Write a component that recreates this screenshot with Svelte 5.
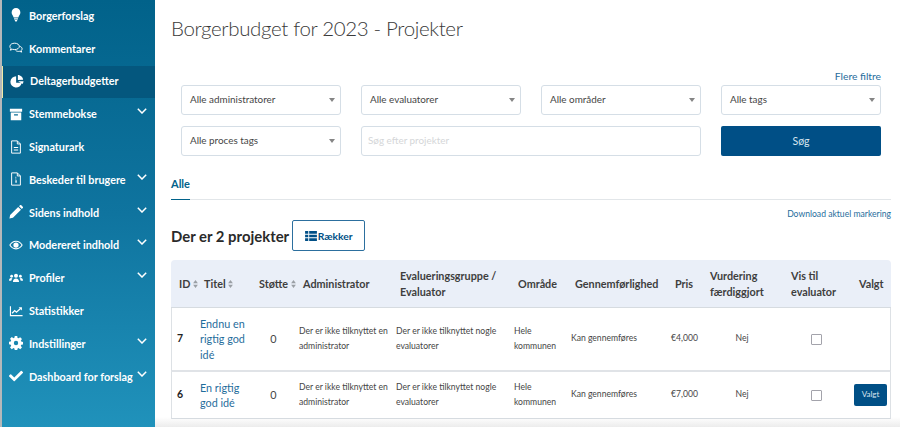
<script>
  const nav = [
    { label: 'Borgerforslag', icon: 'bulb' },
    { label: 'Kommentarer', icon: 'comments' },
    { label: 'Deltagerbudgetter', icon: 'pie', active: true },
    { label: 'Stemmebokse', icon: 'archive', more: true },
    { label: 'Signaturark', icon: 'file' },
    { label: 'Beskeder til brugere', icon: 'note', more: true },
    { label: 'Sidens indhold', icon: 'pencil', more: true },
    { label: 'Modereret indhold', icon: 'eye', more: true },
    { label: 'Profiler', icon: 'users', more: true },
    { label: 'Statistikker', icon: 'chart' },
    { label: 'Indstillinger', icon: 'cog', more: true },
    { label: 'Dashboard for forslag', icon: 'check', more: true }
  ];

  const filters = ['Alle administratorer', 'Alle evaluatorer', 'Alle områder', 'Alle tags'];

  const projects = [
    { id: 7, title: 'Endnu en rigtig god idé', price: '€4,000', selected: false },
    { id: 6, title: 'En rigtig god idé', price: '€7,000', selected: true }
  ];
</script>

{#snippet sortIcon()}
  <svg class="sort" viewBox="0 0 6 10" aria-hidden="true">
    <path d="M3 0 6 4H0zM3 10 0 6h6z" />
  </svg>
{/snippet}

{#snippet navIcon(name)}
  <svg class="nav__icon" viewBox="0 0 16 16" aria-hidden="true">
    {#if name === 'bulb'}
      <path d="M8 0a5 5 0 0 0-5 5c0 2.400 1.800 3.500 2.300 5.800h5.400C11.200 8.500 13 7.400 13 5a5 5 0 0 0-5-5zM5.800 11.800h4.400v1.300H5.800zM6.400 13.800h3.200L8.800 15.500H7.200z" />
    {:else if name === 'comments'}
      <path class="line" d="M6.500 2.500C3.500 2.500 1 4 1 6.200c0 1 .5 1.800 1.300 2.500L1.500 10.500l2.500-1c.8.200 1.600.3 2.500.3 3 0 5.300-1.600 5.300-3.600s-2.300-3.700-5.300-3.700z" />
      <path class="line" d="M12 6c1.800.4 3 1.500 3 2.900 0 .9-.5 1.600-1.100 2.100l.6 1.700-2.300-.9c-1.500.3-3.500.1-4.700-1.100" />
    {:else if name === 'pie'}
      <path d="M7 2.500a6.500 6.500 0 1 0 6.400 7.600H7z" />
      <path d="M9 1c3.200 0 6 2.700 6 5.500l-6 .3zM9.300 8.300H15.500a6.500 6.500 0 0 1-1.300 3.200z" />
    {:else if name === 'archive'}
      <path d="M1 2h14v3.300H1zM2 6.300h12V15H2zm3.800 2v1.300h4.400V8.300z" fill-rule="evenodd" />
    {:else if name === 'file'}
      <path class="line" d="M3 1h6.500L13 4.500V15H3zM9.500 1v3.500H13" />
      <path d="M5.500 8h5v1.200h-5zM5.500 10.800h5V12h-5z" />
    {:else if name === 'note'}
      <path class="line" d="M3 1h6.500L13 4.500V15H3zM9.500 1v3.500H13" />
      <path d="M7.300 5.500h1v1h-1zM7.300 7.500h1v1h-1zM7.300 9.500h1.500v2.800H7.300z" />
    {:else if name === 'pencil'}
      <path d="M0.500 15.500l.8-4L10.500 2.300l3.200 3.200-9.200 9.200zM11.500 1.300l1-1a1.200 1.200 0 0 1 1.600 0l1.600 1.600a1.200 1.200 0 0 1 0 1.600l-1 1z" />
    {:else if name === 'eye'}
      <path d="M8 3C4.500 3 1.800 5.200.3 8c1.500 2.800 4.200 5 7.700 5s6.200-2.200 7.700-5C14.200 5.200 11.500 3 8 3zm0 8.800C5.300 11.800 3 10.300 1.700 8 3 5.700 5.300 4.200 8 4.200s5 1.500 6.300 3.800c-1.300 2.300-3.600 3.800-6.300 3.800z" />
      <circle cx="8" cy="8" r="3" />
    {:else if name === 'users'}
      <circle cx="8" cy="5.500" r="2.300" />
      <circle cx="3" cy="6" r="1.600" />
      <circle cx="13" cy="6" r="1.600" />
      <path d="M4.500 12.500c0-2.300 1.300-3.800 3.500-3.800s3.500 1.500 3.500 3.800zM0 11c0-1.800.9-3 2.300-3 .7 0 1.200.2 1.600.6-.7.7-1.100 1.500-1.300 2.400zM16 11c0-1.800-.9-3-2.300-3-.7 0-1.200.2-1.600.6.700.7 1.100 1.500 1.300 2.400z" />
    {:else if name === 'chart'}
      <path d="M1 2.500h1.300v10.200H15.500V14H1z" />
      <path class="line line--bold" d="M3.500 10.500 6.500 7.500 8.500 9.300 13.500 4.800" />
      <path d="M11 3.800h3.800v3.600z" />
    {:else if name === 'cog'}
      <path fill-rule="evenodd" d="M6.600 0h2.800l.4 2.200 1.100.5 1.900-1.300 2 2-1.300 1.900.5 1.100 2 .4v2.800l-2 .4-.5 1.100 1.300 1.900-2 2-1.900-1.300-1.100.5-.4 2.200H6.600l-.4-2.200-1.100-.5-1.900 1.300-2-2 1.300-1.900-.5-1.100L0 9.400V6.600l2-.4.500-1.100-1.300-1.900 2-2 1.900 1.300 1.100-.5zM8 5.500a2.500 2.500 0 1 0 0 5 2.500 2.500 0 0 0 0-5z" />
    {:else if name === 'check'}
      <path d="M5.400 13.700.2 8.600a.8.800 0 0 1 0-1.100l1.100-1.200a.8.800 0 0 1 1.200 0L6 9.800l7.500-7.500a.8.800 0 0 1 1.100 0l1.200 1.200a.8.800 0 0 1 0 1.100l-9.200 9.100a.8.800 0 0 1-1.200 0z" />
    {/if}
  </svg>
{/snippet}

<div class="page">
  <aside class="side">
    {#each nav as item (item.label)}
      <div class="nav" class:nav--active={item.active}>
        {@render navIcon(item.icon)}
        <span class="nav__label">{item.label}</span>
        {#if item.more}
          <svg class="nav__more" viewBox="0 0 10 6" aria-hidden="true">
            <path d="M.8.8 5 5 9.200.8" />
          </svg>
        {/if}
      </div>
    {/each}
  </aside>

  <main class="main">
    <h1 class="title">Borgerbudget for 2023 - Projekter</h1>

    <section class="filters">
      <div class="filters__more">Flere filtre</div>
      <div class="filters__grid">
        {#each filters as f (f)}
          <div class="select">{f}<span class="select__arrow"></span></div>
        {/each}
        <div class="select">Alle proces tags<span class="select__arrow"></span></div>
        <div class="search">Søg efter projekter</div>
        <button type="button" class="go">Søg</button>
      </div>
    </section>

    <nav class="tabs"><span class="tabs__item">Alle</span></nav>
    <div class="download">Download aktuel markering</div>

    <div class="heading">
      <h2 class="heading__text">Der er 2 projekter</h2>
      <button type="button" class="rows">
        <svg viewBox="0 0 13 11" aria-hidden="true">
          <path d="M0 0h3.500v3H0zM4.500 0H13v3H4.500zM0 4h3.500v3H0zM4.500 4H13v3H4.500zM0 8h3.500v3H0zM4.500 8H13v3H4.500z" />
        </svg>
        Rækker
      </button>
    </div>

    <table class="table">
      <colgroup>
        <col class="w24" /><col class="w55" /><col class="w44" /><col class="w97" />
        <col class="w118" /><col class="w57" /><col class="w100" /><col class="w35" />
        <col class="w81" /><col class="w68" /><col class="w41" />
      </colgroup>
      <thead>
        <tr>
          <th class="nowrap">ID {@render sortIcon()}</th>
          <th class="nowrap">Titel {@render sortIcon()}</th>
          <th class="nowrap">Støtte {@render sortIcon()}</th>
          <th>Administrator</th>
          <th>Evalueringsgruppe / Evaluator</th>
          <th>Område</th>
          <th>Gennemførlighed</th>
          <th>Pris</th>
          <th>Vurdering færdiggjort</th>
          <th>Vis til evaluator</th>
          <th>Valgt</th>
        </tr>
      </thead>
      <tbody>
        {#each projects as p (p.id)}
          <tr>
            <td class="id">{p.id}</td>
            <td class="name">{p.title}</td>
            <td class="num">0</td>
            <td>Der er ikke tilknyttet en administrator</td>
            <td>Der er ikke tilknyttet nogle evaluatorer</td>
            <td>Hele kommunen</td>
            <td>Kan gennemføres</td>
            <td>{p.price}</td>
            <td class="center">Nej</td>
            <td class="center"><span class="check"></span></td>
            <td class="pick">
              {#if p.selected}<button type="button" class="pick__btn">Valgt</button>{/if}
            </td>
          </tr>
        {/each}
      </tbody>
    </table>
  </main>
</div>

<style>
  :global(body) {
    margin: 0;
    background: #fff;
  }

  .page {
    display: flex;
    height: 427px;
    overflow: hidden;
    font-family: "Lato", "Noto Sans", sans-serif;
    color: #2b2b2b;
  }

  .side {
    flex: 0 0 155px;
    box-sizing: border-box;
    border-left: 2px solid #b5b8ba;
    background: linear-gradient(180deg, #01628a 0%, #0f749f 50%, #2092bb 100%);
    color: #fff;
  }
  .nav {
    display: flex;
    align-items: center;
    box-sizing: border-box;
    height: 32.8px;
    padding: 0 8px 2px 7px;
    font-size: 10.800px;
    font-weight: 700;
  }
  .nav--active {
    background: #04577e;
    box-shadow: inset 1px 0 0 #efe9a8;
    padding-left: 8px;
  }
  .nav__icon {
    flex: 0 0 14px;
    width: 14px;
    height: 14px;
    margin-right: 6px;
    fill: #fff;
  }
  .nav__icon .line {
    fill: none;
    stroke: #fff;
    stroke-width: 1.100;
  }
  .nav__icon .line--bold { stroke-width: 1.500; }
  .nav__label {
    flex: 1;
    white-space: nowrap;
  }
  .nav__more {
    flex: none;
    width: 10px;
    height: 6px;
    margin: -5px 0 0 -10px;
    fill: none;
    stroke: #fff;
    stroke-width: 1.500;
  }

  .main {
    flex: 1;
    min-width: 0;
    padding: 0 9px 0 16px;
    background: linear-gradient(180deg, #fff 0, #fff 417px, #ececec 427px);
  }
  .title {
    margin: 0;
    padding-top: 15px;
    height: 68px;
    box-sizing: border-box;
    font-size: 20.500px;
    line-height: 27px;
    font-weight: 300;
    letter-spacing: -0.35px;
    color: #3a3a3a;
  }

  .filters {
    padding: 0 10px;
  }
  .filters__more {
    height: 17px;
    text-align: right;
    font-size: 10.300px;
    line-height: 17px;
    color: #1f6d9c;
  }
  .filters__grid {
    display: grid;
    grid-template-columns: repeat(4, 160px);
    grid-auto-rows: 30px;
    column-gap: 20px;
    row-gap: 11px;
  }
  .select, .search {
    box-sizing: border-box;
    border: 1px solid #d5dee6;
    border-radius: 3px;
    background: #fff;
    font-size: 9.900px;
    line-height: 26px;
    padding: 0 8px;
    color: #454545;
    position: relative;
  }
  .select__arrow {
    position: absolute;
    right: 5px;
    top: 12px;
    border: 3px solid transparent;
    border-top: 4px solid #858585;
    border-bottom: 0;
  }
  .search {
    grid-column: span 2;
    color: #d4d6d8;
    padding-left: 6px;
  }
  .go {
    border: 0;
    border-radius: 2px;
    background: #004f86;
    color: #d7e4ee;
    font: inherit;
    font-size: 10.500px;
  }

  .tabs {
    margin-top: 15px;
    height: 29px;
    border-bottom: 1px solid #e2e6e9;
    box-sizing: border-box;
  }
  .tabs__item {
    display: inline-block;
    height: 29px;
    box-sizing: border-box;
    border-bottom: 1px solid #01628a;
    font-size: 11px;
    line-height: 26px;
    font-weight: 700;
    color: #01628a;
  }
  .download {
    margin-top: 8px;
    height: 12px;
    text-align: right;
    font-size: 8.600px;
    line-height: 12px;
    color: #1f6d9c;
  }

  .heading {
    display: flex;
    align-items: center;
    height: 31px;
    gap: 3px;
  }
  .heading__text {
    margin: 0;
    font-size: 14.900px;
    font-weight: 700;
    color: #2a2a2a;
  }
  .rows {
    width: 73px;
    height: 31px;
    display: flex;
    align-items: center;
    justify-content: center;
    gap: 1px;
    padding: 0;
    background: #fff;
    border: 1px solid #2c6f9e;
    border-radius: 2px;
    font: inherit;
    font-size: 10.300px;
    font-weight: 700;
    color: #004f86;
  }
  .rows svg {
    width: 12px;
    height: 10px;
    fill: #004f86;
  }

  .table {
    width: 720px;
    margin-top: 9px;
    table-layout: fixed;
    border-collapse: separate;
    border-spacing: 0;
  }
  .w24 { width: 24px; }
  .w55 { width: 55px; }
  .w44 { width: 44px; }
  .w97 { width: 97px; }
  .w118 { width: 118px; }
  .w57 { width: 57px; }
  .w100 { width: 100px; }
  .w35 { width: 35px; }
  .w81 { width: 81px; }
  .w68 { width: 68px; }
  .w41 { width: 41px; }

  th {
    height: 48px;
    padding: 0 2px 0 9px;
    background: #eaeff8;
    border-bottom: 1px solid #d6dbe0;
    box-sizing: border-box;
    text-align: left;
    font-size: 10.800px;
    line-height: 16px;
    font-weight: 700;
    color: #3e3e3e;
  }
  th:first-child { padding-left: 8px; border-top-left-radius: 4px; }
  th:last-child { border-top-right-radius: 4px; }
  .nowrap { white-space: nowrap; }
  .sort {
    display: inline-block;
    width: 5px;
    height: 8px;
    fill: #9a9fa5;
  }

  td {
    padding: 0 2px 0 5px;
    font-size: 8.600px;
    line-height: 15.500px;
    color: #454545;
    border-bottom: 1px solid #d6dbe0;
    background: #fff;
  }
  td:first-child { border-left: 1px solid #dde1e5; }
  td:last-child { border-right: 1px solid #dde1e5; }
  tbody tr:nth-child(1) td { height: 62px; border-bottom: 2px solid #e0e3e7; }
  tbody tr:nth-child(2) td { height: 46px; }
  .id {
    font-size: 10.500px;
    font-weight: 700;
    color: #222;
  }
  .name {
    font-size: 10.800px;
    color: #1f6d9c;
  }
  .num {
    text-align: center;
    font-size: 10.800px;
  }
  .center { text-align: center; padding-right: 4px; }
  .check {
    display: inline-block;
    width: 9px;
    height: 9px;
    border: 1px solid #a3a3ab;
    border-radius: 1px;
    vertical-align: middle;
  }
  .pick { padding: 0 4px; }
  .pick__btn {
    width: 33px;
    height: 22px;
    padding: 0;
    border: 0;
    border-radius: 2px;
    background: #004f86;
    color: #d7e4ee;
    font: inherit;
    font-size: 8px;
  }
</style>
